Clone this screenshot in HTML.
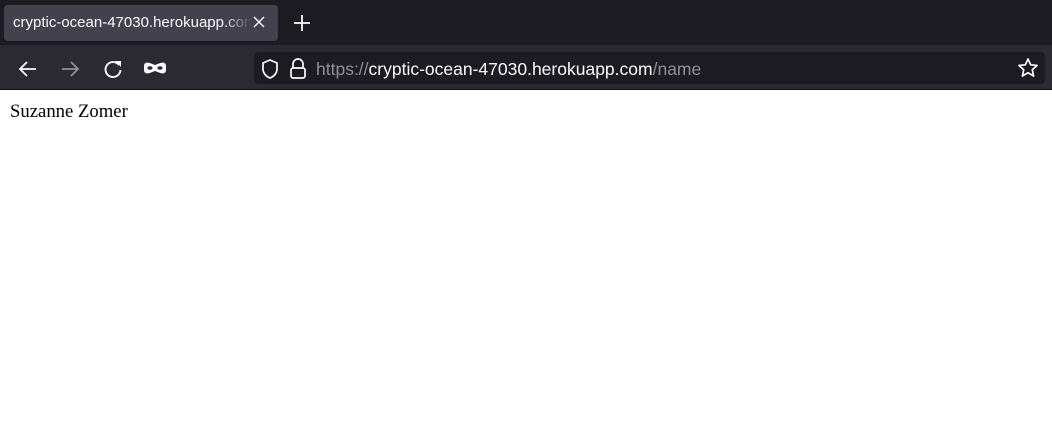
<!DOCTYPE html>
<html><head><meta charset="utf-8"><style>
*{margin:0;padding:0;box-sizing:border-box}
body{width:1052px;height:444px;background:#fff;overflow:hidden;position:relative;font-family:"Liberation Sans",sans-serif}
#tabs{position:absolute;left:0;top:0;width:1052px;height:45px;background:#1c1b22}
#tab{position:absolute;left:4px;top:5px;width:274px;height:36px;background:#42414d;border-radius:4px;color:#fbfbfe;font-size:15px;line-height:36px;padding-left:9px;overflow:hidden;white-space:nowrap}
#tab span{display:inline-block;width:238px;overflow:hidden;-webkit-mask-image:linear-gradient(90deg,#000 88%,transparent);mask-image:linear-gradient(90deg,#000 88%,transparent)}
#bar{position:absolute;left:0;top:45px;width:1052px;height:44px;background:#2b2a33}
#line{position:absolute;left:0;top:89px;width:1052px;height:1px;background:#0c0c0d}
#url{position:absolute;left:254px;top:52px;width:791px;height:32px;background:#1c1b22;border-radius:4px}
#urltext{position:absolute;left:316px;top:59px;font-size:17.5px;color:#fbfbfe;white-space:nowrap;line-height:20px}
#urltext .g{color:#8f8f9d}
svg{position:absolute}
#txt{position:absolute;left:10px;top:101px;font-family:"Liberation Serif",serif;font-size:18.7px;color:#000}
</style></head><body>
<div id="tabs"><div id="tab"><span>cryptic-ocean-47030.herokuapp.com</span></div>
<svg style="left:252px;top:15px" width="14" height="14" viewBox="0 0 14 14"><path d="M2 2L12 12M12 2L2 12" stroke="#fbfbfe" stroke-width="1.4"/></svg>
<svg style="left:293px;top:14px" width="18" height="18" viewBox="0 0 18 18"><path d="M9 1V17M1 9H17" stroke="#fbfbfe" stroke-width="1.8"/></svg>
</div>
<div id="bar"></div><div id="line"></div>
<svg style="left:17px;top:58px" width="22" height="22" viewBox="0 0 22 22"><path d="M19 11H3M10 4L3 11L10 18" stroke="#fbfbfe" stroke-width="1.8" fill="none"/></svg>
<svg style="left:59px;top:58px" width="22" height="22" viewBox="0 0 22 22"><path d="M3 11H19M12 4L19 11L12 18" stroke="#8f8f9d" stroke-width="1.8" fill="none"/></svg>
<svg style="left:102px;top:58px" width="22" height="22" viewBox="0 0 22 22"><path d="M17 7A7.5 7.5 0 1 0 18.5 12" stroke="#fbfbfe" stroke-width="1.9" fill="none"/><path d="M13 3H19V9Z" fill="#fbfbfe"/></svg>
<svg style="left:143px;top:60px" width="24" height="16" viewBox="0 0 24 16"><path d="M1 6C1 2 5 2 8 3.5L12 5L16 3.5C19 2 23 2 23 6V10C23 14 19 14 16 12.5L12 11L8 12.5C5 14 1 14 1 10Z" fill="#fbfbfe"/><ellipse cx="7" cy="8" rx="2.6" ry="1.8" fill="#2b2a33"/><ellipse cx="17" cy="8" rx="2.6" ry="1.8" fill="#2b2a33"/></svg>
<div id="url"></div>
<svg style="left:260px;top:58px" width="20" height="22" viewBox="0 0 20 22"><path d="M10 2L3 5V11C3 15 6 18.5 10 20C14 18.5 17 15 17 11V5Z" stroke="#fbfbfe" stroke-width="1.7" fill="none" stroke-linejoin="round"/></svg>
<svg style="left:288px;top:57px" width="20" height="23" viewBox="0 0 20 23"><path d="M5 11V7A5 5 0 0 1 15 7V11" stroke="#fbfbfe" stroke-width="1.7" fill="none"/><rect x="3" y="11" width="14" height="10" rx="2" stroke="#fbfbfe" stroke-width="1.7" fill="none"/></svg>
<div id="urltext"><span class="g">https://</span>cryptic-ocean-47030.herokuapp.com<span class="g">/name</span></div>
<svg style="left:1017px;top:57px" width="22" height="22" viewBox="0 0 22 22"><path d="M11 2L13.7 7.8L20 8.5L15.3 12.8L16.6 19L11 15.8L5.4 19L6.7 12.8L2 8.5L8.3 7.8Z" stroke="#fbfbfe" stroke-width="1.7" fill="none" stroke-linejoin="round"/></svg>
<div id="txt">Suzanne Zomer</div>
</body></html>
